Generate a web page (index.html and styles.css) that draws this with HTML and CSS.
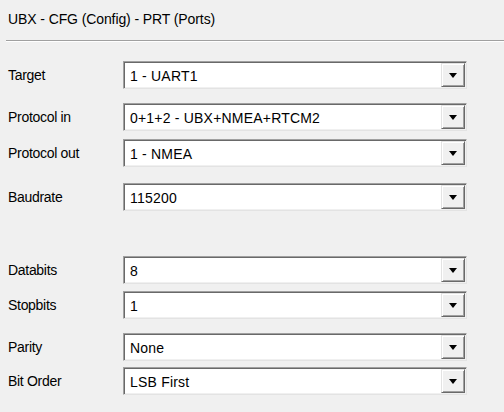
FILE: index.html
```html
<!DOCTYPE html>
<html>
<head>
<meta charset="utf-8">
<link rel="stylesheet" href="styles.css">
</head>
<body>
<div class="panel">
  <div class="title">UBX - CFG (Config) - PRT (Ports)</div>
  <div class="sep"></div>
  <div class="form">
    <div class="row r1"><span class="label">Target</span><div class="combo"><span class="value">1 - UART1</span><span class="btn"><span class="arrow"></span></span></div></div>
    <div class="row r2"><span class="label">Protocol in</span><div class="combo"><span class="value">0+1+2 - UBX+NMEA+RTCM2</span><span class="btn"><span class="arrow"></span></span></div></div>
    <div class="row r3"><span class="label">Protocol out</span><div class="combo"><span class="value">1 - NMEA</span><span class="btn"><span class="arrow"></span></span></div></div>
    <div class="row r4"><span class="label">Baudrate</span><div class="combo"><span class="value">115200</span><span class="btn"><span class="arrow"></span></span></div></div>
    <div class="row r5"><span class="label">Databits</span><div class="combo"><span class="value">8</span><span class="btn"><span class="arrow"></span></span></div></div>
    <div class="row r6"><span class="label">Stopbits</span><div class="combo"><span class="value">1</span><span class="btn"><span class="arrow"></span></span></div></div>
    <div class="row r7"><span class="label">Parity</span><div class="combo"><span class="value">None</span><span class="btn"><span class="arrow"></span></span></div></div>
    <div class="row r8"><span class="label">Bit Order</span><div class="combo"><span class="value">LSB First</span><span class="btn"><span class="arrow"></span></span></div></div>
  </div>
</div>
</body>
</html>
```
FILE: styles.css
```css
html, body {
  margin: 0;
  padding: 0;
  background: #f0f0f0;
}
body {
  width: 504px;
  height: 412px;
  overflow: hidden;
  font-family: "Liberation Sans", Arial, sans-serif;
  font-size: 14px;
  color: #000;
}
.title {
  height: 40px;
  line-height: 38px;
  padding-left: 8px;
  letter-spacing: -0.1px;
}
.sep {
  margin-left: 6px;
  border-top: 1px solid #a0a0a0;
  border-bottom: 1px solid #ffffff;
}
.form {
  display: flex;
  flex-direction: column;
}
.row {
  display: flex;
  align-items: center;
  height: 28px;
}
.r1 { margin-top: 19px; }
.r2 { margin-top: 14px; }
.r3 { margin-top: 8px; }
.r4 { margin-top: 16px; }
.r5 { margin-top: 45px; }
.r6 { margin-top: 7px; }
.r7 { margin-top: 14px; }
.r8 { margin-top: 6px; }
.label {
  width: 115px;
  padding-left: 8px;
  letter-spacing: -0.3px;
}
.combo {
  box-sizing: border-box;
  width: 344px;
  height: 28px;
  display: flex;
  align-items: stretch;
  background: #fff;
  border-style: solid;
  border-width: 1px;
  border-color: #a0a0a0 #e3e3e3 #e3e3e3 #a0a0a0;
  box-shadow: inset 1px 1px 0 #696969, inset -1px -1px 0 #f0f0f0;
  padding: 1px;
}
.value {
  flex: 1;
  display: flex;
  align-items: center;
  padding-left: 5px;
  padding-top: 1px;
  letter-spacing: 0.2px;
}
.btn {
  box-sizing: border-box;
  width: 24px;
  background: #f0f0f0;
  border-style: solid;
  border-width: 1px;
  border-color: #e3e3e3 #696969 #696969 #e3e3e3;
  box-shadow: inset 1px 1px 0 #ffffff, inset -1px -1px 0 #a0a0a0;
  display: flex;
  align-items: center;
  justify-content: center;
}
.arrow {
  width: 0;
  height: 0;
  border-left: 4px solid transparent;
  border-right: 4px solid transparent;
  border-top: 5px solid #000;
  margin-top: 1px;
}
```
